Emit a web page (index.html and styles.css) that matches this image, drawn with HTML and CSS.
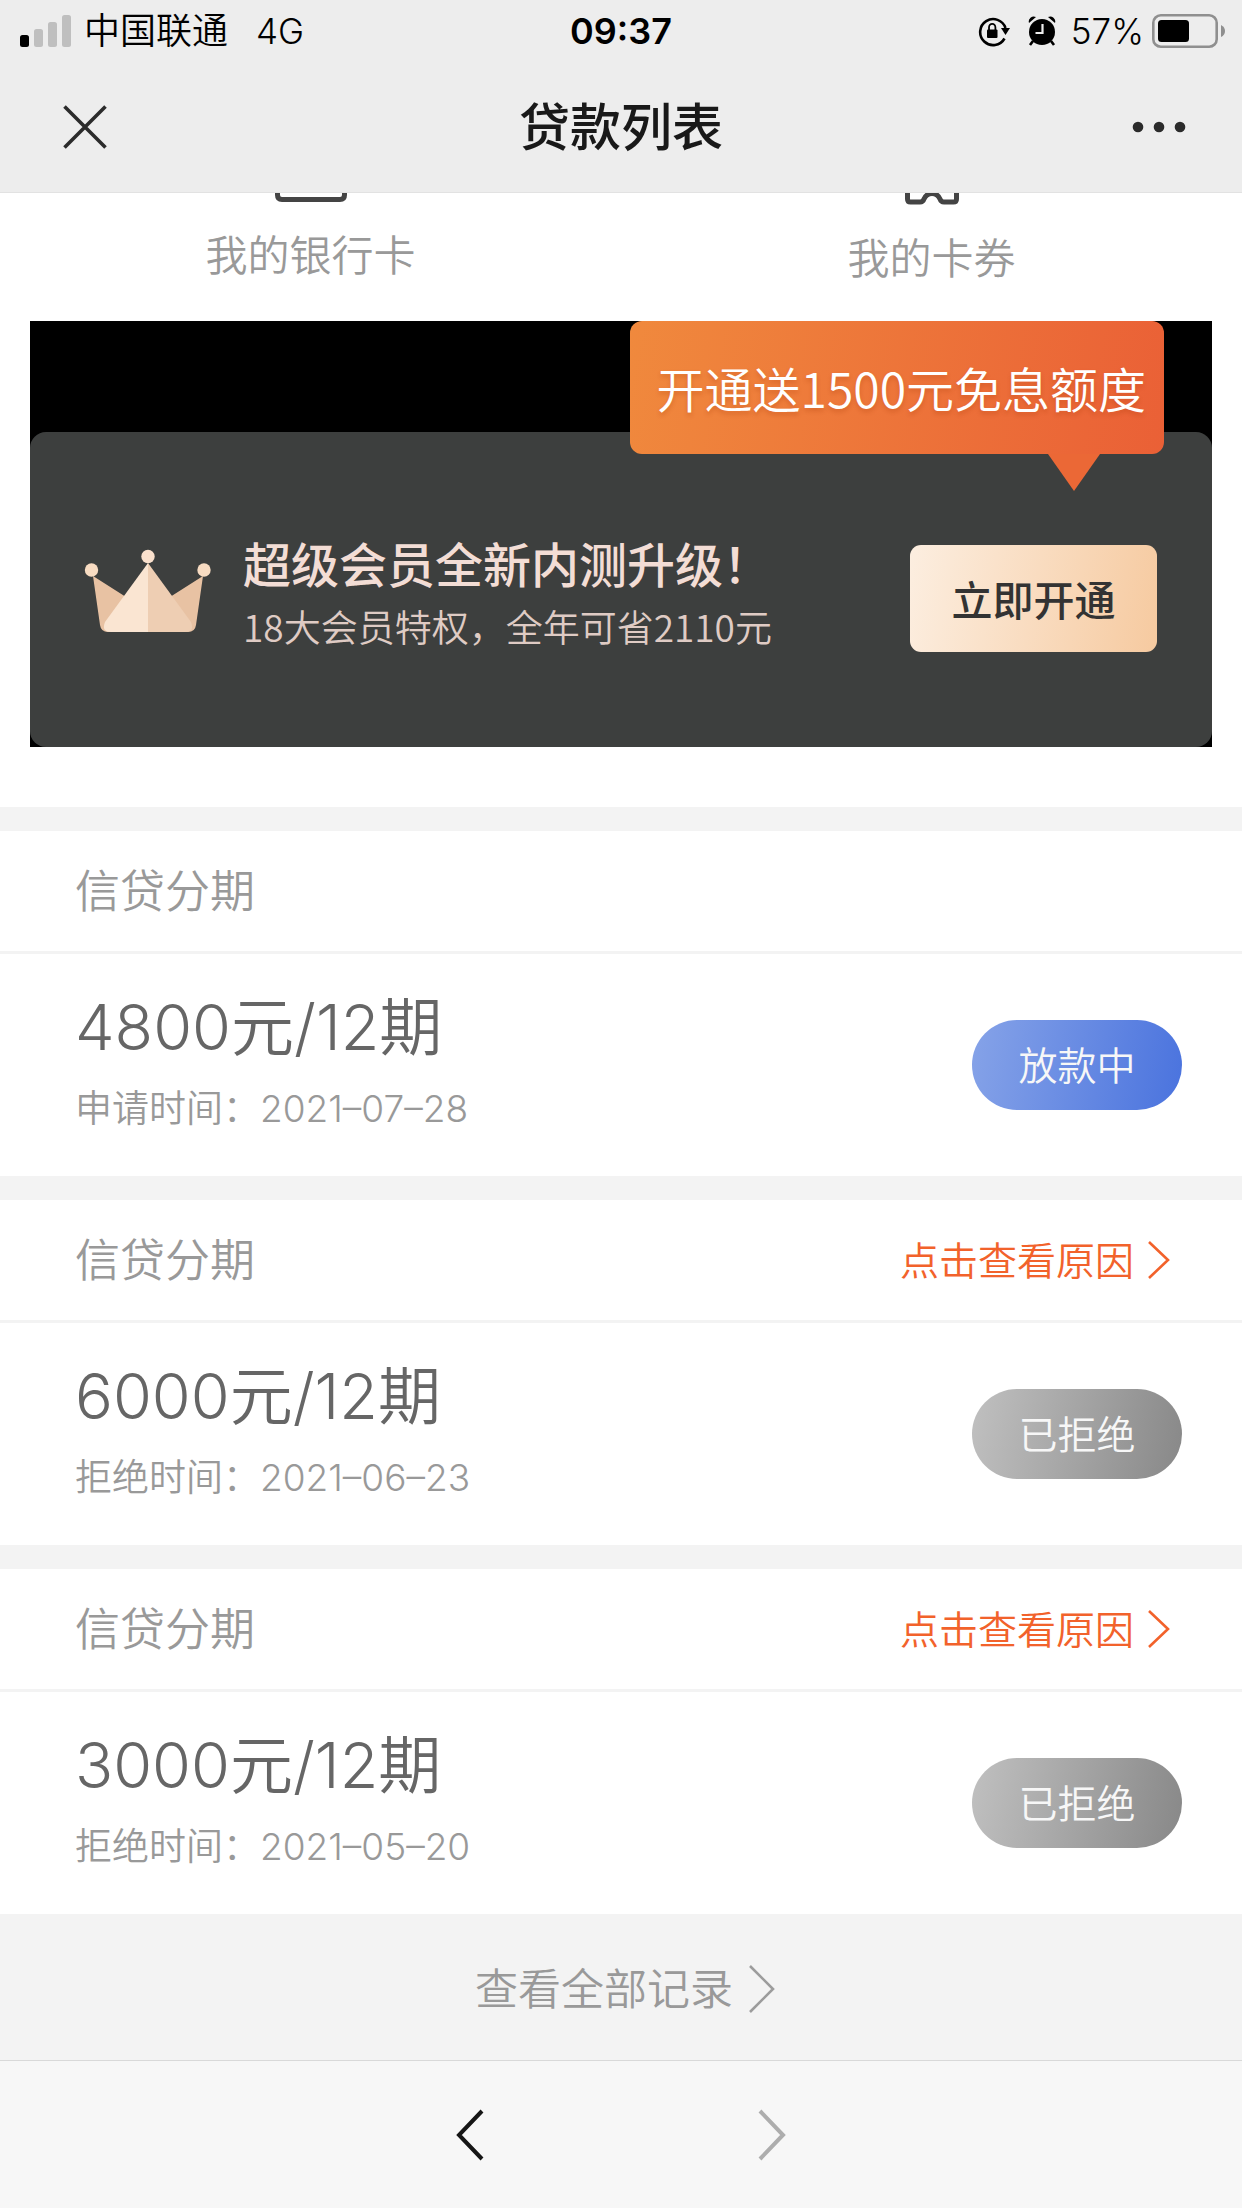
FILE: index.html
```html
<!DOCTYPE html>
<html lang="zh-CN">
<head>
<meta charset="utf-8">
<meta name="viewport" content="width=device-width, initial-scale=1">
<title>贷款列表</title>
<link rel="stylesheet" href="styles.css">
</head>
<body>
<header class="header">
  <div class="status">
    <div class="status-left">
      <svg class="icon" width="52" height="34" viewBox="0 0 52 34" aria-hidden="true">
        <rect x="0" y="21" width="9" height="12" rx="2.5" fill="#000"/>
        <rect x="14" y="15" width="9" height="18" rx="2.5" fill="#bfbfbf"/>
        <rect x="28" y="8" width="9" height="25" rx="2.5" fill="#bfbfbf"/>
        <rect x="42" y="1" width="9" height="32" rx="2.5" fill="#bfbfbf"/>
      </svg>
      <span class="carrier">中国联通</span>
      <span class="network">4G</span>
    </div>
    <time class="clock">09:37</time>
    <div class="status-right">
      <svg class="icon" width="34" height="32" viewBox="0 0 34 32" aria-hidden="true">
        <path d="M27.5 23.5A13 13 0 1 1 28.5 13" fill="none" stroke="#000" stroke-width="2.6"/>
        <path d="M24 13h9l-4.5 7z" fill="#000"/>
        <rect x="10" y="14.500" width="10.500" height="8.500" rx="1" fill="#000"/>
        <path d="M12 15v-2.500a3.200 3.700 0 0 1 6.400 0V15" fill="none" stroke="#000" stroke-width="1.800"/>
      </svg>
      <svg class="icon alarm" width="28" height="32" viewBox="0 0 28 32" aria-hidden="true">
        <circle cx="14" cy="17" r="13" fill="#000"/>
        <path d="M1 8a5 5 0 0 1 7-6zM27 8a5 5 0 0 0-7-6z" fill="#000"/>
        <path d="M5 26l-3 4M23 26l3 4" stroke="#000" stroke-width="2.600"/>
        <path d="M14.500 9v9H7.500" fill="none" stroke="#ededed" stroke-width="2.200"/>
      </svg>
      <span class="percent">57%</span>
      <svg class="icon" width="74" height="34" viewBox="0 0 74 34" aria-hidden="true">
        <rect x="1.300" y="1.300" width="63.400" height="31.400" rx="7.500" fill="none" stroke="#8f8f8f" stroke-width="2.600"/>
        <rect x="6" y="6" width="31" height="22" rx="3.500" fill="#000"/>
        <path d="M69 11q4 2 4 6t-4 6z" fill="#8f8f8f"/>
      </svg>
    </div>
  </div>
  <nav class="nav">
    <button class="nav-button" type="button" aria-label="关闭">
      <svg class="icon" width="44" height="44" viewBox="0 0 44 44"><path d="M1.500 1.500l41 41M42.500 1.500l-41 41" stroke="#2b2b2b" stroke-width="3.600"/></svg>
    </button>
    <h1 class="nav-title">贷款列表</h1>
    <button class="nav-button nav-more" type="button" aria-label="更多">
      <svg class="icon" width="54" height="12" viewBox="0 0 54 12" fill="#2b2b2b"><circle cx="6" cy="6" r="5.300"/><circle cx="27" cy="6" r="5.300"/><circle cx="48" cy="6" r="5.300"/></svg>
    </button>
  </nav>
</header>

<main class="main">
  <section class="top">
    <div class="entries">
      <a class="entry" href="#cards">
        <svg class="icon" width="72" height="10" viewBox="0 0 72 10" fill="none" stroke="#444" stroke-width="5"><path d="M2.500 -8V2q0 4.500 4.500 4.500h58q4.500 0 4.500-4.500V-8"/></svg>
        <span>我的银行卡</span>
      </a>
      <a class="entry" href="#coupons">
        <svg class="icon" width="54" height="13" viewBox="0 0 54 13" fill="none" stroke="#444" stroke-width="5" stroke-linejoin="round"><path d="M2.500 -8V6q0 3 3 3H15q3 0 4-3q2.500-5.500 8-5.500t8 5.500q1 3 4 3h9.500q3 0 3-3V-8"/></svg>
        <span>我的卡券</span>
      </a>
    </div>
    <div class="banner">
      <div class="bubble">开通送1500元免息额度</div>
      <div class="member">
        <svg class="icon" width="128" height="84" viewBox="0 0 128 84" aria-hidden="true">
          <path d="M9 27L64 62 119 27 112 76q-1 7-8 7H24q-7 0-8-7z" fill="#e8c2a3"/>
          <path d="M64 14L21 73q-4 10 6 10h37z" fill="#fae5d2"/>
          <path d="M64 14l43 59q4 10-6 10H64z" fill="#eeceb3"/>
          <circle cx="64" cy="7.500" r="6.700" fill="#fbe1cd"/>
          <circle cx="7.500" cy="21" r="6.700" fill="#f8dcc2"/>
          <circle cx="120" cy="21" r="6.700" fill="#f8dcc2"/>
        </svg>
        <div class="member-text">
          <h2 class="member-title">超级会员全新内测升级！</h2>
          <p class="member-sub">18大会员特权，全年可省2110元</p>
        </div>
        <button class="open-button" type="button">立即开通</button>
      </div>
    </div>
  </section>

  <section class="loan">
    <div class="loan-head"><h2 class="loan-type">信贷分期</h2></div>
    <div class="loan-body">
      <div class="loan-info">
        <p class="amount">4800元/12期</p>
        <p class="date">申请时间：2021–07–28</p>
      </div>
      <span class="pill pill-active">放款中</span>
    </div>
  </section>

  <section class="loan">
    <div class="loan-head">
      <h2 class="loan-type">信贷分期</h2>
      <a class="reason" href="#reason-1">点击查看原因
        <svg class="icon" width="22" height="38" viewBox="0 0 22 38" fill="none" stroke="#f2622b" stroke-width="2.600"><path d="M1 1l19 18L1 37"/></svg>
      </a>
    </div>
    <div class="loan-body">
      <div class="loan-info">
        <p class="amount">6000元/12期</p>
        <p class="date">拒绝时间：2021–06–23</p>
      </div>
      <span class="pill">已拒绝</span>
    </div>
  </section>

  <section class="loan">
    <div class="loan-head">
      <h2 class="loan-type">信贷分期</h2>
      <a class="reason" href="#reason-2">点击查看原因
        <svg class="icon" width="22" height="38" viewBox="0 0 22 38" fill="none" stroke="#f2622b" stroke-width="2.600"><path d="M1 1l19 18L1 37"/></svg>
      </a>
    </div>
    <div class="loan-body">
      <div class="loan-info">
        <p class="amount">3000元/12期</p>
        <p class="date">拒绝时间：2021–05–20</p>
      </div>
      <span class="pill">已拒绝</span>
    </div>
  </section>

  <a class="all" href="#all">查看全部记录
    <svg class="icon" width="26" height="48" viewBox="0 0 26 48" fill="none" stroke="#9c9c9c" stroke-width="2.600"><path d="M1 1l23 23L1 47"/></svg>
  </a>
</main>

<footer class="toolbar">
  <button class="tool" type="button" aria-label="后退">
    <svg class="icon" width="28" height="52" viewBox="0 0 28 52" fill="none" stroke="#161616" stroke-width="4"><path d="M26 2L3 26l23 24"/></svg>
  </button>
  <button class="tool" type="button" aria-label="前进">
    <svg class="icon" width="28" height="52" viewBox="0 0 28 52" fill="none" stroke="#adadad" stroke-width="4"><path d="M2 2l23 24L2 50"/></svg>
  </button>
</footer>
</body>
</html>
```
FILE: styles.css
```css
* {
  box-sizing: border-box;
}

body {
  margin: 0;
  min-height: 100vh;
  display: flex;
  flex-direction: column;
  background: #f7f7f7;
  color: #999;
  font-family: Inter, "Noto Sans CJK SC", sans-serif;
  font-size: 42px;
  font-weight: 350;
  line-height: 1;
}

h1, h2, p {
  margin: 0;
  font-weight: inherit;
}

a {
  color: inherit;
  text-decoration: none;
}

button {
  border: 0;
  padding: 0;
  background: none;
  font-family: inherit;
}

.icon {
  display: block;
  flex: none;
}

/* Status bar and page title */
.header {
  background: #ededed;
  border-bottom: 1px solid #e2e2e2;
  color: #000;
}

.status {
  display: grid;
  grid-template-columns: 1fr auto 1fr;
  align-items: center;
  height: 62px;
  padding: 0 16px;
  font-size: 35px;
}

.status-left,
.status-right {
  display: flex;
  align-items: center;
}

.status-left {
  padding-left: 4px;
}

.status-right {
  justify-content: flex-end;
}

.carrier {
  margin-left: 12px;
  font-size: 36px;
}

.network {
  margin-left: 28px;
}

.clock {
  font-size: 36px;
  font-weight: 600;
}

.alarm {
  margin: 0 15px 0 17px;
}

.percent {
  margin-right: 8px;
}

.nav {
  display: grid;
  grid-template-columns: 1fr auto 1fr;
  align-items: center;
  height: 130px;
  padding: 0 56px;
}

.nav-button {
  justify-self: start;
  margin-left: 7px;
}

.nav-more {
  justify-self: end;
}

.nav-title {
  color: #191919;
  font-size: 51px;
  font-weight: 500;
}

/* Shortcuts and membership banner */
.main {
  flex: 1;
  background: #f3f3f3;
}

.top {
  padding: 0 30px 60px;
  background: #fff;
}

.entries {
  display: grid;
  grid-template-columns: 1fr 1fr;
  height: 128px;
  margin: 0 -30px;
}

.entry {
  display: flex;
  flex-direction: column;
  align-items: center;
  gap: 32px;
}

.banner {
  background: #000;
}

.bubble {
  position: relative;
  width: fit-content;
  margin: 0 48px -22px auto;
  padding: 42px 18px 43px 27px;
  border-radius: 12px;
  background: linear-gradient(100deg, #f0893d, #ea6036);
  color: #fff;
  font-family: "Noto Sans CJK SC", sans-serif;
  font-size: 48px;
  text-shadow: 0 3px 4px rgba(170, 60, 10, 0.3);
}

.bubble::after {
  content: "";
  position: absolute;
  top: 100%;
  right: 64px;
  border: solid transparent;
  border-width: 37px 26px 0;
  border-top-color: #eb6836;
}

.member {
  display: flex;
  align-items: center;
  min-height: 315px;
  padding: 3px 55px 0 54px;
  border-radius: 16px;
  background: #3d3f3e;
  font-family: "Noto Sans CJK SC", sans-serif;
}

.member-text {
  display: grid;
  gap: 22px;
  flex: 1;
  margin-left: 31px;
}

.member-title {
  color: #f3ddd5;
  font-size: 48px;
  font-weight: 500;
}

.member-sub {
  color: #dfcbc4;
  font-size: 37px;
}

.open-button {
  width: 247px;
  height: 107px;
  margin-top: 14px;
  border-radius: 11px;
  background: linear-gradient(100deg, #fceee0, #f6caa0);
  color: #333;
  font-size: 41px;
  font-weight: 500;
}

/* Loan records */
.loan {
  margin-top: 24px;
  background: #fff;
}

.loan-head {
  display: flex;
  align-items: center;
  justify-content: space-between;
  height: 123px;
  padding: 0 72px 0 75px;
  border-bottom: 3px solid #f3f3f3;
}

.loan-type {
  font-size: 45px;
}

.reason {
  display: flex;
  align-items: center;
  gap: 14px;
  color: #f2622b;
  font-size: 39px;
}

.loan-body {
  display: flex;
  align-items: center;
  justify-content: space-between;
  height: 222px;
  padding: 0 60px 0 75px;
}

.loan-info {
  padding-bottom: 8px;
}

.amount {
  color: #666;
  font-size: 63px;
}

.date {
  margin-top: 31px;
  font-size: 37px;
}

.pill {
  width: 210px;
  padding-top: 2px;
  border-radius: 45px;
  background: linear-gradient(100deg, #c0c0c0, #888);
  color: #f7f7f7;
  font-size: 39px;
  line-height: 88px;
  text-align: center;
}

.pill-active {
  background: linear-gradient(100deg, #86a3e8, #4a73de);
}

.all {
  display: flex;
  align-items: center;
  justify-content: center;
  gap: 16px;
  height: 146px;
  padding: 4px 0 0 8px;
  font-size: 43px;
}

/* Browser toolbar */
.toolbar {
  display: flex;
  justify-content: center;
  gap: 274px;
  height: 148px;
  border-top: 1px solid #d9d9d9;
  background: #f7f7f7;
}

.tool {
  width: 28px;
}
```
